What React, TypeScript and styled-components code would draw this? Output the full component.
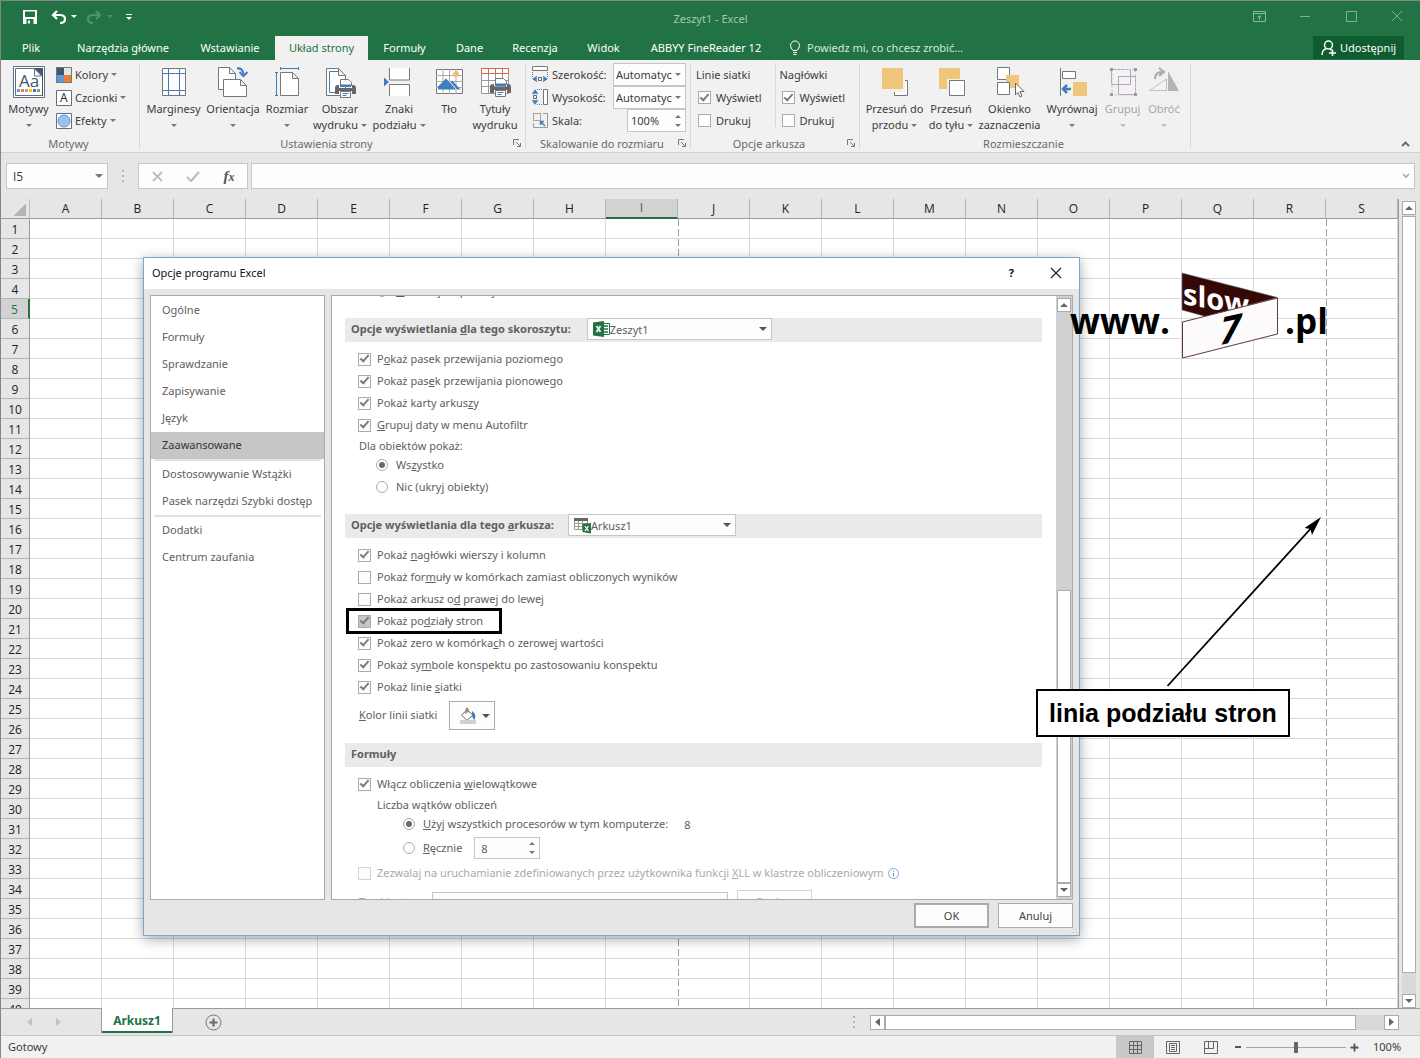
import React from "react";
import styled, { createGlobalStyle, css } from "styled-components";

const green = "#217346";
const chrome = "#e6e6e6";
const ribbonBg = "#f1f1f1";

const GlobalStyle = createGlobalStyle`
  *, *::before, *::after { box-sizing: border-box; }
  body { margin: 0; font-family: "Noto Sans", "Open Sans", sans-serif; font-size: 11px; color: #3c3c3c; }
  button, input, select { font: inherit; color: inherit; margin: 0; padding: 0; }
  button { background: none; border: 0; cursor: default; }
  h2, h3 { margin: 0; font-size: inherit; font-weight: inherit; }
  svg { display: block; flex: none; }
`;

/* ---------- shared controls ---------- */

const Caret = styled.span<{ $up?: boolean; $size?: number; $color?: string }>`
  display: inline-block;
  flex: none;
  width: 0;
  height: 0;
  border: ${(p) => p.$size ?? 3}px solid transparent;
  ${(p) =>
    p.$up
      ? css`border-top: 0; border-bottom-color: ${p.$color ?? "#777"};`
      : css`border-bottom: 0; border-top-color: ${p.$color ?? "#777"};`}
`;

const SideCaret = styled.span<{ $dir: "left" | "right"; $color?: string }>`
  width: 0;
  height: 0;
  border: 4px solid transparent;
  ${(p) =>
    p.$dir === "left"
      ? css`border-left: 0; border-right: 5px solid ${p.$color ?? "#666"};`
      : css`border-right: 0; border-left: 5px solid ${p.$color ?? "#666"};`}
`;

const Tick = styled.input<{ $pressed?: boolean }>`
  appearance: none;
  flex: none;
  width: 13px;
  height: 13px;
  border: 1px solid #ababab;
  background: ${(p) => (p.$pressed ? "#c6c6c6" : "#fdfdfd")};
  display: grid;
  place-items: center;
  &:checked::after {
    content: "";
    width: 5px;
    height: 9px;
    margin-top: -3px;
    border: solid #7a7a7a;
    border-width: 0 2px 2px 0;
    transform: rotate(42deg);
  }
  &:disabled { border-color: #d4d4d4; }
`;

const Radio = styled.input`
  appearance: none;
  flex: none;
  width: 12px;
  height: 12px;
  border: 1px solid #ababab;
  border-radius: 50%;
  background: #fff;
  display: grid;
  place-items: center;
  &:checked::after {
    content: "";
    width: 6px;
    height: 6px;
    border-radius: 50%;
    background: #6a6a6a;
  }
`;

const Field = styled.span<{ $w: number; $h?: number; $pl?: number; $top?: boolean }>`
  display: flex;
  align-items: center;
  align-self: ${(p) => (p.$top ? "flex-start" : "auto")};
  flex: none;
  width: ${(p) => p.$w}px;
  height: ${(p) => p.$h ?? 22}px;
  padding: 0 4px 0 ${(p) => p.$pl ?? 0}px;
  border: 1px solid #c6c6c6;
  background: #fdfdfd;
`;

const Select = styled.select`
  appearance: none;
  flex: 1;
  min-width: 0;
  margin-right: 3px;
  border: 0;
  outline: 0;
  background: transparent;
  overflow: hidden;
`;

const TextInput = styled.input`
  flex: 1;
  min-width: 0;
  width: 100%;
  border: 0;
  outline: 0;
  background: transparent;
  padding-left: 3px;
`;

const SpinArrows = styled.span`
  display: flex;
  flex-direction: column;
  gap: 6px;
`;

const Spin = () => (
  <SpinArrows>
    <Caret $up />
    <Caret />
  </SpinArrows>
);

/* ---------- window frame ---------- */

const Window = styled.div`
  position: relative;
  display: flex;
  flex-direction: column;
  height: 100vh;
  overflow: hidden;
  border-top: 1px solid #868686;
  border-left: 1px solid #868686;
  background: ${chrome};
`;

const TitleBar = styled.header`
  display: grid;
  grid-template-columns: 1fr auto 1fr;
  height: 35px;
  background: ${green};
  color: #a3c7b3;
`;

const QuickAccess = styled.div`
  display: flex;
  align-items: center;
  padding: 0 0 5px 22px;
  gap: 5px;
`;

const QuickButton = styled.button<{ $gap?: number }>`
  display: flex;
  align-items: center;
  margin-right: ${(p) => p.$gap ?? 0}px;
`;

const WindowTitle = styled.div`
  line-height: 36px;
`;

const WindowButtons = styled.div`
  display: flex;
  justify-content: flex-end;
  align-items: flex-start;
  button {
    width: 46px;
    height: 30px;
    display: grid;
    place-items: center;
  }
`;

const TabStrip = styled.nav`
  display: flex;
  height: 24px;
  background: ${green};
  color: #fff;
`;

const RibbonTab = styled.button<{ $w: number; $active?: boolean }>`
  width: ${(p) => p.$w}px;
  padding-bottom: 1px;
  white-space: nowrap;
  background: ${(p) => (p.$active ? ribbonBg : "transparent")};
  color: ${(p) => (p.$active ? green : "#fff")};
`;

const TellMe = styled.label`
  display: flex;
  align-items: center;
  gap: 6px;
  flex: 1;
  padding: 0 0 1px 12px;
  color: #d5e6dc;
  input::placeholder { color: #d5e6dc; }
  input { padding: 0; }
`;

const Share = styled.button`
  display: flex;
  align-items: center;
  justify-content: center;
  gap: 4px;
  width: 91px;
  height: 23px;
  margin-right: 16px;
  background: #0e5c2f;
  color: #fff;
`;

/* ---------- ribbon ---------- */

const Ribbon = styled.div`
  display: flex;
  height: 93px;
  padding-top: 3px;
  border-bottom: 1px solid #d2d2d2;
  background: ${ribbonBg};
`;

const Group = styled.section<{ $w: number; $pad: number }>`
  display: flex;
  flex-direction: column;
  width: ${(p) => p.$w}px;
  height: 85px;
  padding-left: ${(p) => p.$pad}px;
  border-right: 1px solid #d8d8d8;
`;

const GroupBody = styled.div`
  display: flex;
  flex: none;
  height: 73px;
`;

const GroupFooter = styled.div<{ $pad: number }>`
  display: flex;
  flex: none;
  align-items: center;
  height: 16px;
  margin-left: -${(p) => p.$pad}px;
  padding: 0 3px 1px 0;
  color: #6a6a6a;
  h2 { flex: 1; text-align: center; }
`;

const BigButton = styled.button<{ $w: number }>`
  display: flex;
  flex-direction: column;
  align-items: center;
  width: ${(p) => p.$w}px;
  padding-top: 3px;
  line-height: 16px;
  white-space: nowrap;
  svg { margin-bottom: 3px; }
  &:disabled { color: #a6a6a6; }
`;

const LabelLine = styled.span`
  display: flex;
  align-items: center;
  gap: 3px;
  height: 16px;
`;

const SmallColumn = styled.div<{ $ml?: number }>`
  display: flex;
  flex-direction: column;
  margin-left: ${(p) => p.$ml ?? 0}px;
`;

const SmallButton = styled.button`
  display: flex;
  align-items: center;
  gap: 3px;
  height: 23px;
`;

const ScaleRow = styled.div`
  display: flex;
  align-items: center;
  gap: 3px;
  width: 154px;
  height: 23px;
  label { flex: 1; white-space: nowrap; }
`;

const OptionColumn = styled.div`
  width: 84px;
  height: 64px;
  & + & { padding-left: 4px; }
  &:first-child { width: 80px; border-right: 1px solid #d8d8d8; }
  h3 { line-height: 23px; }
`;

const OptionLabel = styled.label`
  display: flex;
  align-items: center;
  gap: 5px;
  height: 23px;
  padding-left: 2px;
`;

const CollapseButton = styled.button`
  margin: auto 10px 5px auto;
`;

/* ---------- formula bar ---------- */

const FormulaBar = styled.div`
  display: flex;
  height: 46px;
  padding: 10px 5px 10px 5px;
`;

const NameBox = styled(Field)`
  font-family: "Open Sans", sans-serif;
  font-size: 12px;
  input { padding-left: 6px; }
`;

const Grip = styled.span<{ $w: number }>`
  display: grid;
  place-content: center;
  gap: 3px;
  width: ${(p) => p.$w}px;
  i { width: 2px; height: 2px; background: #b4b4b4; }
`;

const FormulaButtons = styled.div`
  display: flex;
  margin-right: 3px;
  border: 1px solid #c6c6c6;
  background: #fdfdfd;
  button { width: 36px; display: grid; place-items: center; }
`;

const Fx = styled.em`
  font: italic bold 15px "Liberation Serif", serif;
  color: #555;
  small { font-size: 12px; }
`;

const FormulaField = styled.div`
  display: flex;
  align-items: center;
  flex: 1;
  padding-right: 4px;
  border: 1px solid #c6c6c6;
  background: #fdfdfd;
`;

/* ---------- sheet ---------- */

const SheetArea = styled.div`
  display: flex;
  flex: 1;
  min-height: 0;
`;

const GridClip = styled.div`
  flex: 1;
  min-width: 0;
  overflow: hidden;
  border-right: 1px solid #9b9b9b;
  background: linear-gradient(${chrome} 20px, #fff 20px);
`;

const GridTable = styled.table`
  table-layout: fixed;
  width: 1397px;
  border-collapse: separate;
  border-spacing: 0;
  font-family: "Open Sans", sans-serif;
  font-size: 12px;
  color: #222;
  col { width: 72px; }
  col:first-child { width: 29px; }
  tr { height: 20px; }
  th, td { padding: 0; height: 20px; line-height: 16px; }
`;

const Corner = styled.td`
  border-right: 1px solid #bdbdbd;
  border-bottom: 1px solid #9b9b9b;
  background: linear-gradient(135deg, transparent 50%, #b4b4b4 50%) 13px 5px / 12px 12px no-repeat ${chrome};
`;

const ColHead = styled.th<{ $on?: boolean }>`
  font-weight: 400;
  border-right: 1px solid #b4b4b4;
  border-bottom: ${(p) => (p.$on ? `2px solid ${green}` : "1px solid #9b9b9b")};
  background: ${(p) => (p.$on ? "#d2d2d2" : chrome)};
  color: ${(p) => (p.$on ? green : "inherit")};
`;

const RowHead = styled.th<{ $on?: boolean }>`
  font-weight: 400;
  && { padding-top: 2px; }
  border-bottom: 1px solid #b4b4b4;
  border-right: ${(p) => (p.$on ? `2px solid ${green}` : "1px solid #9b9b9b")};
  background: ${(p) => (p.$on ? "#d2d2d2" : chrome)};
  color: ${(p) => (p.$on ? green : "inherit")};
`;

const Cell = styled.td<{ $break?: boolean; $open?: boolean }>`
  border-bottom: 1px solid #d9d9d9;
  border-right: ${(p) => (p.$open ? "0" : "1px solid #d9d9d9")};
  background: ${(p) =>
    p.$break
      ? "repeating-linear-gradient(#a0a0a0 0 7px, #fff 7px 10px) left top / 1px 20px no-repeat #fff"
      : "#fff"};
`;

const VScroll = styled.div`
  display: flex;
  flex-direction: column;
  width: 14px;
  margin: 2px 4px 0 3px;
  background: #d9d9d9;
`;

const ScrollButton = styled.button`
  display: grid;
  place-items: center;
  flex: none;
  width: 14px;
  height: 14px;
  border: 1px solid #ababab;
  background: #fff;
`;

const VThumb = styled.div`
  flex: 1;
  margin: 1px 0 21px;
  border: 1px solid #ababab;
  background: #fff;
`;

const SheetTabs = styled.div`
  display: flex;
  align-items: center;
  height: 28px;
  padding-right: 21px;
  border-top: 1px solid #9b9b9b;
  border-bottom: 1px solid #c6c6c6;
`;

const TabArrows = styled.div`
  display: flex;
  gap: 24px;
  width: 100px;
  padding-left: 26px;
`;

const SheetTab = styled.button`
  align-self: flex-start;
  width: 72px;
  height: 25px;
  margin-top: -1px;
  border: solid #9b9b9b;
  border-width: 0 1px 0;
  box-shadow: inset 0 -2px ${green};
  background: #fff;
  color: ${green};
  font-size: 12px;
  font-weight: 700;
`;

const AddSheet = styled.button`
  margin: 0 auto 0 32px;
`;

const HScroll = styled.div`
  display: flex;
  width: 529px;
  height: 15px;
  background: #d9d9d9;
  button { height: 15px; width: 15px; }
`;

const HThumb = styled.div`
  flex: 1;
  margin-right: 28px;
  border: 1px solid #ababab;
  background: #fff;
`;

const StatusBar = styled.footer`
  display: flex;
  align-items: center;
  height: 22px;
  padding: 0 19px 0 7px;
  background: ${ribbonBg};
`;

const Status = styled.span`
  flex: 1;
  padding-bottom: 1px;
`;

const ViewButton = styled.button<{ $on?: boolean }>`
  display: grid;
  place-items: center;
  width: 38px;
  height: 22px;
  background: ${(p) => (p.$on ? "#c8c8c8" : "transparent")};
`;

const ZoomSlider = styled.input`
  appearance: none;
  width: 100px;
  height: 12px;
  margin: 0 4px 0 1px;
  background: linear-gradient(#a6a6a6, #a6a6a6) center / 100% 1px no-repeat;
  &::-webkit-slider-thumb { appearance: none; width: 4px; height: 11px; background: #666; }
`;

const ZoomValue = styled.span`
  width: 28px;
  margin-left: 14px;
  padding-bottom: 1px;
`;

/* ---------- dialog ---------- */

const Dialog = styled.div`
  position: absolute;
  left: 142px;
  top: 256px;
  display: flex;
  flex-direction: column;
  width: 937px;
  height: 679px;
  border: 1px solid #7ba3d3;
  background: ${chrome};
  box-shadow: 0 3px 12px rgba(0, 0, 0, 0.35);
  color: #606060;
`;

const DialogTitle = styled.div`
  display: flex;
  align-items: center;
  height: 31px;
  padding: 0 17px 2px 8px;
  background: #fff;
  color: #111;
  h2 { flex: 1; }
`;

const HelpButton = styled.button`
  margin-right: 36px;
  font-weight: 700;
`;

const DialogBody = styled.div`
  display: flex;
  gap: 6px;
  flex: 1;
  min-height: 0;
  padding: 6px 6px 0;
`;

const DialogNav = styled.nav`
  width: 175px;
  padding-top: 1px;
  border: 1px solid #ababab;
  background: #fff;
  hr { height: 2px; margin: 0 3px; border: 0; background: #e3e3e3; }
`;

const NavItem = styled.button<{ $on?: boolean }>`
  display: block;
  width: 100%;
  height: 27px;
  padding: 0 0 2px 11px;
  text-align: left;
  white-space: nowrap;
  background: ${(p) => (p.$on ? "#c6c6c6" : "transparent")};
  color: ${(p) => (p.$on ? "#333" : "inherit")};
`;

const OptionsPane = styled.div`
  display: flex;
  flex: 1;
  min-width: 0;
  border: 1px solid #ababab;
  background: #fff;
  overflow: hidden;
`;

const Scrolled = styled.div`
  flex: 1;
  margin-top: -16px;
  padding: 0 14px 0 13px;
  white-space: nowrap;
`;

const PaneScroll = styled.div`
  display: flex;
  flex-direction: column;
  width: 16px;
  padding: 2px 1px;
  background: #d0d0d0;
`;

const PaneThumb = styled.div`
  flex: 1;
  margin-top: 278px;
  border: 1px solid #ababab;
  background: #fff;
`;

const SectionHead = styled.div<{ $gap?: number }>`
  display: flex;
  align-items: center;
  gap: ${(p) => p.$gap ?? 14}px;
  height: 24px;
  margin: 13px 0 6px;
  padding-left: 6px;
  background: #eaeaea;
  h3 { padding-bottom: 3px; font-weight: 700; }
`;

const OptionRow = styled.label<{ $indent?: number; $mark?: boolean }>`
  position: relative;
  display: flex;
  align-items: center;
  gap: ${(p) => (p.$indent ? 8 : 6)}px;
  width: fit-content;
  height: 22px;
  margin-left: ${(p) => p.$indent ?? 13}px;
  ${(p) =>
    p.$mark &&
    css`
      &::after {
        content: "";
        position: absolute;
        inset: -2px -19px -2px -12px;
        border: 3px solid #000;
      }
    `}
`;

const RowText = styled.span`
  padding-bottom: 2px;
`;

const Inline = styled.div<{ $mt?: number; $gap?: number; $disabled?: boolean }>`
  display: flex;
  align-items: center;
  gap: ${(p) => p.$gap ?? 0}px;
  margin-top: ${(p) => p.$mt ?? 0}px;
  color: ${(p) => (p.$disabled ? "#a9a9a9" : "inherit")};
`;

const SubLabel = styled.div<{ $indent?: number }>`
  height: 18px;
  line-height: 19px;
  margin-left: ${(p) => p.$indent ?? 0}px;
`;

const Spacer = styled.div`
  height: 3px;
`;

const ColorButton = styled.button`
  display: flex;
  align-items: center;
  gap: 5px;
  width: 46px;
  height: 29px;
  padding-left: 9px;
  border: 1px solid #ababab;
  background: #fdfdfd;
`;

const DialogFooter = styled.div`
  display: flex;
  justify-content: flex-end;
  gap: 9px;
  height: 35px;
  padding: 3px 6px 0;
`;

const DialogButton = styled.button<{ $primary?: boolean; $disabled?: boolean }>`
  width: 75px;
  height: 25px;
  padding-bottom: ${(p) => (p.$disabled ? 3 : 1)}px;
  border: ${(p) => (p.$primary ? 2 : 1)}px solid ${(p) => (p.$disabled ? "#d4d4d4" : "#ababab")};
  background: #fdfdfd;
  color: ${(p) => (p.$disabled ? "#a9a9a9" : "#444")};
`;

const ClusterLabel = styled.label`
  width: 64px;
  margin-left: 14px;
  padding-bottom: 3px;
`;

const ResizeGrip = styled.span`
  position: absolute;
  right: 1px;
  bottom: 1px;
  width: 9px;
  height: 9px;
  background: radial-gradient(#b0b0b0 1px, transparent 1px) 0 0 / 3px 3px;
  clip-path: polygon(100% 0, 100% 100%, 0 100%);
`;

/* ---------- annotations laid over the sheet ---------- */

const LogoMark = styled.svg`
  position: absolute;
  left: 1067px;
  top: 267px;
`;

const ArrowMark = styled.svg`
  position: absolute;
  left: 1161px;
  top: 512px;
`;

const Callout = styled.div`
  position: absolute;
  left: 1035px;
  top: 688px;
  padding: 0 11px;
  border: 2px solid #000;
  background: #fff;
  color: #000;
  font: bold 25px/44px "Liberation Sans", Arial, sans-serif;
  white-space: nowrap;
`;

/* ---------- icons ---------- */

const Svg = ({ w = 32, h = w, children }: { w?: number; h?: number; children: React.ReactNode }) => (
  <svg width={w} height={h} viewBox={`0 0 ${w} ${h}`} fill="none" aria-hidden="true">
    {children}
  </svg>
);

const blue = "#3f7dbd";

const Page = ({ x, y, w, h, f = 7 }: { x: number; y: number; w: number; h: number; f?: number }) => (
  <path
    d={`M${x} ${y}h${w - f}l${f} ${f}v${h - f}h${-w}z M${x + w - f} ${y}v${f}h${f}`}
    fill="#fff"
    stroke="#777"
  />
);

const Printer = ({ x, y }: { x: number; y: number }) => (
  <g transform={`translate(${x} ${y})`}>
    <path d="M5.500 7v-6.500h8l3 3v3.500" fill="#fff" stroke="#777" />
    <path d="M0 9q0-3 3-3h1v3h13v-3h1q3 0 3 3v6h-4v-3h-13v3h-4z" fill="#666" />
    <path d="M5 5.500h11v2.500h-11z" fill={blue} />
    <path d="M5.500 12.500h10v6h-10z" fill="#fff" stroke="#777" />
    <path d="M7.500 14.500h6M7.500 16.500h4" stroke={blue} />
  </g>
);

const ThemesIcon = () => (
  <Svg>
    <path d="M.5.500h31v31h-31z" fill="#fff" stroke="#5f6f88" />
    <path d="M2.500 2.500h27v27h-27z" fill="#fff" stroke="#5f6f88" />
    <path d="M21 2h9v28h-1V10z" fill="#44546a" />
    <path d="M21.500 2.500v7.500h7z" fill="#fff" stroke="#5f6f88" />
    <text x="6" y="21" fontSize="17" fill="#44546a" fontFamily="Open Sans">Aa</text>
    {["#5b9bd5", "#ed7d31", "#a5a5a5", "#ffc000", "#4472c4", "#70ad47"].map((c, i) => (
      <path key={c} d={`M${4 + i * 4} 23h3v3h-3z`} fill={c} />
    ))}
  </Svg>
);

const ColorsIcon = () => (
  <Svg w={16}>
    <path d="M0 0h8v8H0z" fill="#44546a" />
    <path d="M8 0h8v8H8z" fill="#e7e6e6" />
    <path d="M0 8h8v8H0z" fill="#5b9bd5" />
    <path d="M8 8h8v8H8z" fill="#ed7d31" />
    <path d="M.5.500h15v15H.5z" stroke="#777" />
  </Svg>
);

const FontsIcon = () => (
  <Svg w={16}>
    <path d="M.5.500h15v15H.5z" fill="#fff" stroke="#5f6f88" />
    <text x="4" y="12" fontSize="12" fill="#222" fontFamily="Open Sans">A</text>
  </Svg>
);

const EffectsIcon = () => (
  <Svg w={16}>
    <path d="M.5.500h15v15H.5z" fill="#fff" stroke="#5f6f88" />
    <circle cx="8" cy="8" r="6" fill="#9dc3ea" stroke="#5b8fcb" />
  </Svg>
);

const MarginsIcon = () => (
  <Svg>
    <path d="M4.500 2.500h23v27h-23z" fill="#fff" stroke="#777" />
    <path d="M10.500 3v26M21.500 3v26M5 7.500h22M5 24.500h22" stroke={blue} />
  </Svg>
);

const OrientationIcon = () => (
  <Svg>
    <Page x={1.5} y={1.5} w={17} h={22} f={6} />
    <Page x={6.5} y={13.5} w={23} h={17} f={6} />
    <path d="M20 2.500q6-1 6.500 6" stroke={blue} strokeWidth="2" />
    <path d="M22.500 6l4 4 4-4" stroke={blue} strokeWidth="2" />
  </Svg>
);

const SizeIcon = () => (
  <Svg>
    <Page x={9.5} y={6.5} w={18} h={23} f={6} />
    <path d="M9 2.500h18M9.500 1v3M27.500 1v3M5.500 7v22M4 6.500h3M4 29.500h3" stroke={blue} />
  </Svg>
);

const PrintAreaIcon = () => (
  <Svg>
    <Page x={2.5} y={2.5} w={19} h={27} f={7} />
    <path d="M14 5.500H5.500v21H12" stroke={blue} />
    <Printer x={11} y={13} />
  </Svg>
);

const BreaksIcon = () => (
  <Svg>
    <path d="M6.500 2v12h20V2M6.500 30V18.500h20V30" fill="#fff" stroke="#777" />
    <path d="M1 11.500l5 4.500-5 4.500z" fill={blue} />
  </Svg>
);

const BackgroundIcon = () => (
  <Svg>
    <path d="M3.500 3.500h26v24h-26z" fill="#fff" stroke="#777" />
    <path d="M10 3v25M16.500 3v25M23 3v25M3 9.500h27M3 15.500h27M3 21.500h27" stroke="#aaa" />
    <circle cx="23" cy="8" r="3" fill="#f0c070" />
    <path d="M5 23.500v-3l8-8 4 4 2-2 8.500 9z" fill={blue} />
    <path d="M16.500 15.500l7 8" stroke="#fff" />
  </Svg>
);

const TitlesIcon = () => (
  <Svg>
    <path d="M2.500 3.500h27v24h-27z" fill="#fff" stroke="#999" />
    <path d="M9.500 8v20M16.500 8v20M23.500 8v20M2 14.500h27M2 20.500h27" stroke="#999" />
    <path d="M2.500 2.500h27v5h-27zM9.500 3v5M16.500 3v5M23.500 3v5" fill="#fff" stroke="#d0694f" />
    <Printer x={11} y={12} />
  </Svg>
);

const WidthIcon = () => (
  <Svg w={17}>
    <path d="M.5.500h15v4H.5z" fill="#fff" stroke="#777" />
    <path d="M.5 6v5M15.500 6v5" stroke="#777" strokeDasharray="1 1" />
    <path d="M6.500 11.500h3v3h-3z" stroke="#666" />
    <path d="M5 10.500L1.500 13 5 15.500M11 10.500l3.500 2.500-3.500 2.500M1 13h4M11 13h4" stroke={blue} strokeWidth="1.500" />
  </Svg>
);

const HeightIcon = () => (
  <Svg w={17}>
    <path d="M11.500.500h4v15h-4z" fill="#fff" stroke="#777" />
    <path d="M5 .5h5M5 15.500h5" stroke="#777" strokeDasharray="1 1" />
    <path d="M1.500 6.500h3v3h-3z" stroke="#666" />
    <path d="M.5 5L3 1.500 5.500 5M.5 11L3 14.500 5.500 11M3 1v4M3 11v4" stroke={blue} strokeWidth="1.500" />
  </Svg>
);

const ScaleIcon = () => (
  <Svg w={17}>
    <path d="M11 1.500h4.500v14h-14V11" stroke="#999" />
    <path d="M1.500 1.500h7v7h-7z" stroke="#555" strokeDasharray="1 1" />
    <path d="M8 9.500h4M8.500 9v4M9 10l4 4" stroke={blue} strokeWidth="1.400" />
  </Svg>
);

const gold = "#efc67c";

const FrontIcon = () => (
  <Svg>
    <path d="M15.500 14.500h13v15h-13z" fill="#fff" stroke="#777" />
    <path d="M2 2h24v24H2z" fill={ribbonBg} />
    <path d="M3 2h21v21H3z" fill={gold} />
  </Svg>
);

const BackIcon = () => (
  <Svg>
    <path d="M4 2h21v21H4z" fill={gold} />
    <path d="M12 13h18v18H12z" fill={ribbonBg} />
    <path d="M14.500 14.500h15v15h-15z" fill="#fff" stroke="#777" />
  </Svg>
);

const SelectionIcon = () => (
  <Svg>
    <path d="M3.500 1.500h12v12h-12z" fill="#fff" stroke="#777" />
    <path d="M12 9h13v13H12z" fill={gold} />
    <path d="M3.500 16.500h12v12h-12z" fill="#fff" stroke="#777" />
    <path d="M21.500 17v12l2.500-2.500 2 4.500 2-1-2-4.500h4z" fill="#fff" stroke="#666" />
  </Svg>
);

const AlignIcon = () => (
  <Svg>
    <path d="M4.500 2v28" stroke="#777" />
    <path d="M6.500 5.500h13v7h-13z" fill="#fff" stroke="#777" />
    <path d="M17 16h14v14H17z" fill={gold} />
    <path d="M11 19l-4 4 4 4M7 23h8" stroke={blue} strokeWidth="2.500" />
  </Svg>
);

const GroupIcon = () => (
  <Svg>
    <path d="M4.500 3.500h19v15h-19zM11.500 10.500h17v18h-17z" fill="#f6f0f8" stroke="#aaa" />
    <path d="M11.500 10.500h12v8h-12z" stroke="#aaa" />
    <path d="M5 3.500h23.500v25.500H5z" stroke="#c8c0cc" strokeDasharray="2 2" />
    <path d="M3 2h3v3H3zM27 2h3v3h-3zM3 27h3v3H3zM27 27h3v3h-3z" fill="#999" />
  </Svg>
);

const RotateIcon = () => (
  <Svg>
    <path d="M1.500 24.500L18.500 13v11.500z" fill="#f6f0f8" stroke="#c0c0c0" />
    <path d="M20 5l11 20H20z" fill="#b4b4b4" />
    <path d="M7 13q0-7 7-7M11 2l5 4-5 4" stroke="#aaa" strokeWidth="2" />
  </Svg>
);

const Launcher = () => (
  <Svg w={9}>
    <path d="M.5 6V.5H6M7.500 4v3.500H4M3 3l4 4" stroke="#777" />
  </Svg>
);

const BucketIcon = () => (
  <Svg w={18} h={17}>
    <path d="M8 3l6 5-6 5.500-5.500-5.500z" fill="#fff" stroke="#666" />
    <path d="M7 7V2.500q0-2 2-1l0 4" stroke="#666" />
    <path d="M13 4q5 3 2.500 9-3-2-2.500-9z" fill={blue} />
    <path d="M1 13h16v4H1z" fill="#d0d0d0" />
  </Svg>
);

const ExcelFileIcon = () => (
  <Svg w={17}>
    <path d="M9 2.500h7.500v11H9z" fill="#fff" stroke={green} />
    <path d="M10 5h5M10 8h5M10 11h5" stroke={green} strokeWidth="1.500" />
    <path d="M0 1.500L11 0v16L0 14.500z" fill={green} />
    <path d="M3.500 5l4 6M7.500 5l-4 6" stroke="#fff" strokeWidth="1.600" />
  </Svg>
);

const SheetFileIcon = () => (
  <Svg w={17}>
    <path d="M.5 1.500h13v11H.5zM4.500 2v10M8.500 2v10M1 6.500h12M1 9.500h12" fill="#fff" stroke="#999" />
    <path d="M0 1h14v3H0z" fill="#666" />
    <path d="M8.500 7L17 6v10.500L8.500 15z" fill={green} />
    <path d="M11 9l3.500 5M14.500 9L11 14" stroke="#fff" strokeWidth="1.300" />
  </Svg>
);

/* ---------- data ---------- */

const tabs: [string, number][] = [
  ["Plik", 60],
  ["Narzędzia główne", 124],
  ["Wstawianie", 90],
  ["Układ strony", 93],
  ["Formuły", 73],
  ["Dane", 57],
  ["Recenzja", 74],
  ["Widok", 63],
  ["ABBYY FineReader 12", 142],
];

type Big = { label: string; second?: string; w: number; icon: React.ReactNode; menu?: boolean; off?: boolean };

const pageSetup: Big[] = [
  { label: "Marginesy", w: 59, icon: <MarginsIcon />, menu: true },
  { label: "Orientacja", w: 60, icon: <OrientationIcon />, menu: true },
  { label: "Rozmiar", w: 48, icon: <SizeIcon />, menu: true },
  { label: "Obszar", second: "wydruku", w: 58, icon: <PrintAreaIcon />, menu: true },
  { label: "Znaki", second: "podziału", w: 60, icon: <BreaksIcon />, menu: true },
  { label: "Tło", w: 40, icon: <BackgroundIcon /> },
  { label: "Tytuły", second: "wydruku", w: 52, icon: <TitlesIcon /> },
];

const arrange: Big[] = [
  { label: "Przesuń do", second: "przodu", w: 59, icon: <FrontIcon />, menu: true },
  { label: "Przesuń", second: "do tyłu", w: 54, icon: <BackIcon />, menu: true },
  { label: "Okienko", second: "zaznaczenia", w: 63, icon: <SelectionIcon /> },
  { label: "Wyrównaj", w: 62, icon: <AlignIcon />, menu: true },
  { label: "Grupuj", w: 39, icon: <GroupIcon />, menu: true, off: true },
  { label: "Obróć", w: 44, icon: <RotateIcon />, menu: true, off: true },
];

const columns = "ABCDEFGHIJKLMNOPQRS".split("");
const rows = Array.from({ length: 40 }, (_, i) => i + 1);

const workbookOptions = ["P&okaż pasek przewijania poziomego", "Pokaż pas&ek przewijania pionowego", "Pokaż karty arkus&zy", "&Grupuj daty w menu Autofiltr"];

const sheetOptions = [
  { text: "Pokaż &nagłówki wierszy i kolumn", on: true },
  { text: "Pokaż for&muły w komórkach zamiast obliczonych wyników", on: false },
  { text: "Pokaż arkusz o&d prawej do lewej", on: false },
  { text: "Pokaż po&działy stron", on: true, mark: true },
  { text: "Pokaż zero w komórka&ch o zerowej wartości", on: true },
  { text: "Pokaż sy&mbole konspektu po zastosowaniu konspektu", on: true },
  { text: "Pokaż linie &siatki", on: true },
];

/* ---------- composed parts ---------- */

/* "&" precedes the letter that is the keyboard shortcut. */
const Mnemonic = ({ text }: { text: string }) => {
  const i = text.indexOf("&");
  return (
    <RowText>
      {text.slice(0, i)}
      <u>{text[i + 1]}</u>
      {text.slice(i + 2)}
    </RowText>
  );
};

const RibbonButton = ({ label, second, w, icon, menu, off }: Big) => (
  <BigButton $w={w} disabled={off}>
    {icon}
    <LabelLine>{label}</LabelLine>
    <LabelLine>
      {second}
      {menu && <Caret $color={off ? "#bbb" : "#777"} />}
    </LabelLine>
  </BigButton>
);

const RibbonGroup = ({ title, w, pad, launcher, children }: { title: string; w: number; pad: number; launcher?: boolean; children: React.ReactNode }) => (
  <Group $w={w} $pad={pad}>
    <GroupBody>{children}</GroupBody>
    <GroupFooter $pad={pad}>
      <h2>{title}</h2>
      {launcher && (
        <button aria-label={title}>
          <Launcher />
        </button>
      )}
    </GroupFooter>
  </Group>
);

const Header = () => (
  <>
    <TitleBar>
      <QuickAccess>
        <QuickButton aria-label="Zapisz" $gap={9}>
          <Svg w={14}>
            <path d="M0 0h14v14H0z M2 1.500h10V7H2z M3.500 9h7v5h-7z" fill="#fff" fillRule="evenodd" />
            <path d="M5 10.500h2v3H5z" fill="#fff" />
          </Svg>
        </QuickButton>
        <QuickButton aria-label="Cofnij">
          <Svg w={15} h={14}>
            <path d="M6 1L2 5l4 4M2.500 5H9q5 0 5 4t-5 4" stroke="#fff" strokeWidth="2.200" />
          </Svg>
        </QuickButton>
        <Caret $color="#fff" />
        <QuickButton aria-label="Ponów">
          <Svg w={20} h={14}>
            <path d="M14 1l4 4-4 4M17.500 5H11Q6 5 6 9t5 4" stroke="#4f9070" strokeWidth="2.200" />
          </Svg>
        </QuickButton>
        <Caret $color="#4f9070" />
        <QuickButton aria-label="Dostosuj pasek narzędzi">
          <Svg w={32} h={8}>
            <path d="M8 1.500h6" stroke="#fff" />
            <path d="M8 4h6l-3 3z" fill="#fff" />
          </Svg>
        </QuickButton>
      </QuickAccess>
      <WindowTitle>Zeszyt1 - Excel</WindowTitle>
      <WindowButtons>
        <button aria-label="Opcje wyświetlania Wstążki">
          <Svg w={13} h={11}>
            <path d="M.5.500h12v10H.5zM1 2.500h11M6.500 9V4.500M4.500 6.500l2-2 2 2" stroke="#8ab89e" />
          </Svg>
        </button>
        <button aria-label="Minimalizuj">
          <Svg w={10}>
            <path d="M0 5.500h10" stroke="#7fb095" />
          </Svg>
        </button>
        <button aria-label="Maksymalizuj">
          <Svg w={11}>
            <path d="M.5.500h10v10H.5z" stroke="#7fb095" />
          </Svg>
        </button>
        <button aria-label="Zamknij">
          <Svg w={10}>
            <path d="M0 0l10 10M10 0L0 10" stroke="#7fb095" />
          </Svg>
        </button>
      </WindowButtons>
    </TitleBar>
    <TabStrip>
      {tabs.map(([t, w]) => (
        <RibbonTab key={t} $w={w} $active={t === "Układ strony"}>
          {t}
        </RibbonTab>
      ))}
      <TellMe>
        <Svg w={12} h={15}>
          <path d="M4 10.500Q1.500 8 1.500 5.500a4.500 4.500 0 019 0Q10.500 8 8 10.500zM4 12.500h4M4.500 14.500h3" stroke="#fff" />
        </Svg>
        <TextInput aria-label="Powiedz mi" placeholder="Powiedz mi, co chcesz zrobić..." />
      </TellMe>
      <Share>
        <Svg w={15} h={16}>
          <circle cx="7.500" cy="5" r="4" stroke="#fff" strokeWidth="1.500" />
          <path d="M1 15q0-5 4.500-6.500M9.500 9l1 1.500M8 13h7M11.500 9.500v6.500" stroke="#fff" strokeWidth="1.500" />
        </Svg>
        Udostępnij
      </Share>
    </TabStrip>
  </>
);

const RibbonPanel = () => (
  <Ribbon>
    <RibbonGroup title="Motywy" w={139} pad={4}>
      <RibbonButton label="Motywy" w={47} icon={<ThemesIcon />} menu />
      <SmallColumn $ml={4}>
        <SmallButton><ColorsIcon />Kolory <Caret /></SmallButton>
        <SmallButton><FontsIcon />Czcionki <Caret /></SmallButton>
        <SmallButton><EffectsIcon />Efekty <Caret /></SmallButton>
      </SmallColumn>
    </RibbonGroup>
    <RibbonGroup title="Ustawienia strony" w={386} pad={4} launcher>
      {pageSetup.map((b) => (
        <RibbonButton key={b.label} {...b} />
      ))}
    </RibbonGroup>
    <RibbonGroup title="Skalowanie do rozmiaru" w={165} pad={6} launcher>
      <SmallColumn>
        <ScaleRow>
          <WidthIcon />
          <label htmlFor="fit-w">Szerokość:</label>
          <Field $w={73} $h={23} $pl={2}>
            <Select id="fit-w"><option>Automatycznie</option></Select>
            <Caret />
          </Field>
        </ScaleRow>
        <ScaleRow>
          <HeightIcon />
          <label htmlFor="fit-h">Wysokość:</label>
          <Field $w={73} $h={23} $pl={2}>
            <Select id="fit-h"><option>Automatycznie</option></Select>
            <Caret />
          </Field>
        </ScaleRow>
        <ScaleRow>
          <ScaleIcon />
          <label htmlFor="scale">Skala:</label>
          <Field $w={59} $h={23}>
            <TextInput id="scale" defaultValue="100%" />
            <Spin />
          </Field>
        </ScaleRow>
      </SmallColumn>
    </RibbonGroup>
    <RibbonGroup title="Opcje arkusza" w={169} pad={5} launcher>
      {["Linie siatki", "Nagłówki"].map((t) => (
        <OptionColumn key={t}>
          <h3>{t}</h3>
          <OptionLabel><Tick type="checkbox" defaultChecked />Wyświetl</OptionLabel>
          <OptionLabel><Tick type="checkbox" />Drukuj</OptionLabel>
        </OptionColumn>
      ))}
    </RibbonGroup>
    <RibbonGroup title="Rozmieszczanie" w={331} pad={5}>
      {arrange.map((b) => (
        <RibbonButton key={b.label} {...b} />
      ))}
    </RibbonGroup>
    <CollapseButton aria-label="Zwiń Wstążkę">
      <Svg w={9} h={6}>
        <path d="M1 5l3.500-3.500L8 5" stroke="#666" strokeWidth="1.800" />
      </Svg>
    </CollapseButton>
  </Ribbon>
);

const Formula = () => (
  <FormulaBar>
    <NameBox $w={102} $h={26}>
      <TextInput aria-label="Pole nazwy" defaultValue="I5" />
      <Caret $size={4} />
    </NameBox>
    <Grip $w={30}><i /><i /><i /></Grip>
    <FormulaButtons>
      <button aria-label="Anuluj">
        <Svg w={11}><path d="M1 1l9 9M10 1l-9 9" stroke="#bdbdbd" strokeWidth="1.800" /></Svg>
      </button>
      <button aria-label="Wpis">
        <Svg w={14} h={11}><path d="M1 6l4 4 8-9" stroke="#bdbdbd" strokeWidth="2.200" /></Svg>
      </button>
      <button aria-label="Wstaw funkcję"><Fx>f<small>x</small></Fx></button>
    </FormulaButtons>
    <FormulaField>
      <TextInput aria-label="Pasek formuły" />
      <Svg w={8} h={6}><path d="M1 1l3 3 3-3" stroke="#aaa" strokeWidth="1.600" /></Svg>
    </FormulaField>
  </FormulaBar>
);

const Sheet = () => (
  <SheetArea>
    <GridClip>
      <GridTable>
        <colgroup>
          <col />
          {columns.map((c) => (
            <col key={c} />
          ))}
        </colgroup>
        <thead>
          <tr>
            <Corner />
            {columns.map((c) => (
              <ColHead key={c} scope="col" $on={c === "I"}>{c}</ColHead>
            ))}
          </tr>
        </thead>
        <tbody>
          {rows.map((r) => (
            <tr key={r}>
              <RowHead scope="row" $on={r === 5}>{r}</RowHead>
              {columns.map((c) => (
                <Cell key={c} $open={c === "I" || c === "R"} $break={c === "J" || c === "S"} />
              ))}
            </tr>
          ))}
        </tbody>
      </GridTable>
    </GridClip>
    <VScroll>
      <ScrollButton aria-label="W górę"><Caret $up $size={4} $color="#666" /></ScrollButton>
      <VThumb />
      <ScrollButton aria-label="W dół"><Caret $size={4} $color="#666" /></ScrollButton>
    </VScroll>
  </SheetArea>
);

const Bottom = () => (
  <>
    <SheetTabs>
      <TabArrows>
        <SideCaret $dir="left" $color="#c0c0c0" />
        <SideCaret $dir="right" $color="#c0c0c0" />
      </TabArrows>
      <SheetTab>Arkusz1</SheetTab>
      <AddSheet aria-label="Nowy arkusz">
        <Svg w={17}>
          <circle cx="8.500" cy="8.500" r="7.500" stroke="#777" />
          <path d="M8.500 4.500v8M4.500 8.500h8" stroke="#666" strokeWidth="2" />
        </Svg>
      </AddSheet>
      <Grip $w={32}><i /><i /><i /></Grip>
      <HScroll>
        <ScrollButton aria-label="W lewo"><SideCaret $dir="left" /></ScrollButton>
        <HThumb />
        <ScrollButton aria-label="W prawo"><SideCaret $dir="right" /></ScrollButton>
      </HScroll>
    </SheetTabs>
    <StatusBar>
      <Status>Gotowy</Status>
      <ViewButton $on aria-label="Normalny">
        <Svg w={13}><path d="M.5.500h12v12H.5zM4.500 0v13M8.500 0v13M0 4.500h13M0 8.500h13" stroke="#666" /></Svg>
      </ViewButton>
      <ViewButton aria-label="Układ strony">
        <Svg w={14} h={13}><path d="M.5.500h13v12H.5zM3.500 2.500h7v8h-7zM5 4.500h4M5 6.500h4M5 8.500h4" stroke="#666" /></Svg>
      </ViewButton>
      <ViewButton aria-label="Podgląd podziału stron">
        <Svg w={14} h={13}><path d="M.5.500h13v12H.5zM4.500 1v6M9.500 1v6.500H1" stroke="#666" /></Svg>
      </ViewButton>
      <button aria-label="Pomniejsz">
        <Svg w={15} h={10}><path d="M5 5h6" stroke="#555" strokeWidth="2" /></Svg>
      </button>
      <ZoomSlider type="range" aria-label="Powiększenie" defaultValue={50} />
      <button aria-label="Powiększ">
        <Svg w={9}><path d="M.5 4.500h8M4.500.500v8" stroke="#555" strokeWidth="1.800" /></Svg>
      </button>
      <ZoomValue>100%</ZoomValue>
    </StatusBar>
  </>
);

const OptionsDialog = () => (
  <Dialog role="dialog" aria-label="Opcje programu Excel">
    <DialogTitle>
      <h2>Opcje programu Excel</h2>
      <HelpButton aria-label="Pomoc">?</HelpButton>
      <button aria-label="Zamknij okno">
        <Svg w={12}><path d="M1 1l10 10M11 1L1 11" stroke="#222" strokeWidth="1.200" /></Svg>
      </button>
    </DialogTitle>
    <DialogBody>
      <DialogNav>
        {["Ogólne", "Formuły", "Sprawdzanie", "Zapisywanie", "Język", "Zaawansowane"].map((t) => (
          <NavItem key={t} $on={t === "Zaawansowane"}>{t}</NavItem>
        ))}
        <hr />
        <NavItem>Dostosowywanie Wstążki</NavItem>
        <NavItem>Pasek narzędzi Szybki dostęp</NavItem>
        <hr />
        <NavItem>Dodatki</NavItem>
        <NavItem>Centrum zaufania</NavItem>
      </DialogNav>
      <OptionsPane>
        <Scrolled>
          <OptionRow $indent={31}>
            <Radio type="radio" name="direction" />
            <Mnemonic text="&Od lewej do prawej" />
          </OptionRow>
          <Spacer />
          <SectionHead $gap={16}>
            <h3><label htmlFor="book"><Mnemonic text="Opcje wyświetlania &dla tego skoroszytu:" /></label></h3>
            <Field $w={185} $pl={5} $top>
              <ExcelFileIcon />
              <Select id="book"><option>Zeszyt1</option></Select>
              <Caret $size={4} $color="#555" />
            </Field>
          </SectionHead>
          {workbookOptions.map((t) => (
            <OptionRow key={t}>
              <Tick type="checkbox" defaultChecked />
              <Mnemonic text={t} />
            </OptionRow>
          ))}
          <SubLabel $indent={14}>Dla obiektów pokaż:</SubLabel>
          <OptionRow $indent={31}>
            <Radio type="radio" name="objects" defaultChecked />
            <Mnemonic text="Ws&zystko" />
          </OptionRow>
          <OptionRow $indent={31}>
            <Radio type="radio" name="objects" />
            <Mnemonic text="Nic (ukry&j obiekty)" />
          </OptionRow>
          <Spacer />
          <SectionHead>
            <h3><label htmlFor="sheet"><Mnemonic text="Opcje wyświetlania dla tego &arkusza:" /></label></h3>
            <Field $w={168} $pl={5} $top>
              <SheetFileIcon />
              <Select id="sheet"><option>Arkusz1</option></Select>
              <Caret $size={4} $color="#555" />
            </Field>
          </SectionHead>
          {sheetOptions.map((o) => (
            <OptionRow key={o.text} $mark={o.mark}>
              <Tick type="checkbox" defaultChecked={o.on} $pressed={o.mark} />
              <Mnemonic text={o.text} />
            </OptionRow>
          ))}
          <Inline $mt={3} $gap={12}>
            <OptionRow as="span" $indent={14}>
              <Mnemonic text="&Kolor linii siatki" />
            </OptionRow>
            <ColorButton aria-label="Kolor linii siatki">
              <BucketIcon />
              <Caret $size={4} $color="#555" />
            </ColorButton>
          </Inline>
          <SectionHead><h3>Formuły</h3></SectionHead>
          <OptionRow>
            <Tick type="checkbox" defaultChecked />
            <Mnemonic text="Włącz obliczenia &wielowątkowe" />
          </OptionRow>
          <SubLabel $indent={32}>Liczba wątków obliczeń</SubLabel>
          <Inline $gap={16}>
            <OptionRow $indent={58}>
              <Radio type="radio" name="threads" defaultChecked />
              <Mnemonic text="&Użyj wszystkich procesorów w tym komputerze:" />
            </OptionRow>
            <SubLabel>8</SubLabel>
          </Inline>
          <Inline $mt={2} $gap={12}>
            <OptionRow $indent={58}>
              <Radio type="radio" name="threads" />
              <Mnemonic text="&Ręcznie" />
            </OptionRow>
            <Field $w={66} $pl={3}>
              <TextInput aria-label="Liczba wątków" defaultValue="8" />
              <Spin />
            </Field>
          </Inline>
          <Inline $mt={3} $gap={4} $disabled>
            <OptionRow>
              <Tick type="checkbox" disabled />
              <Mnemonic text="Zezwalaj na uruchamianie zdefiniowanych przez użytkownika funkcji &XLL w klastrze obliczeniowym" />
            </OptionRow>
            <Svg w={11}>
              <circle cx="5.500" cy="5.500" r="5" stroke="#7ba7dd" />
              <path d="M5.500 5v3.500M5.500 2.500v1.200" stroke="#5b8fd0" />
            </Svg>
          </Inline>
          <Inline $mt={6} $gap={9} $disabled>
            <ClusterLabel htmlFor="cluster">Typ klastra:</ClusterLabel>
            <Field $w={296}>
              <TextInput id="cluster" disabled />
            </Field>
            <DialogButton $disabled>Opcje...</DialogButton>
          </Inline>
        </Scrolled>
        <PaneScroll>
          <ScrollButton aria-label="Przewiń w górę"><Caret $up $size={4} $color="#666" /></ScrollButton>
          <PaneThumb />
          <ScrollButton aria-label="Przewiń w dół"><Caret $size={4} $color="#666" /></ScrollButton>
        </PaneScroll>
      </OptionsPane>
    </DialogBody>
    <DialogFooter>
      <DialogButton $primary>OK</DialogButton>
      <DialogButton>Anuluj</DialogButton>
    </DialogFooter>
    <ResizeGrip />
  </Dialog>
);

const Logo = () => (
  <LogoMark width="262" height="94" viewBox="1068 268 262 94" role="img" aria-label="www.slow7.pl">
    <g fontFamily="Open Sans" fontWeight="700" fontSize="35" fill="#000">
      <text x="1070" y="334">www.</text>
      <text x="1285" y="334">.pl</text>
    </g>
    <path d="M1182 273l95.500 24.500-72 19L1182 310z" fill="#330806" stroke="#777" strokeWidth=".6" />
    <g transform="translate(1183 304) skewY(10)">
      <text fontFamily="Open Sans" fontWeight="700" fontSize="29" fill="#fff">slow</text>
    </g>
    <path d="M1182.500 322l95-24v36l-95 24z" fill="#fdfafb" stroke="#5b3a38" />
    <g transform="translate(1220 345) skewY(-12)">
      <text fontFamily="Open Sans" fontStyle="italic" fontWeight="700" fontSize="38" fill="#000">7</text>
    </g>
  </LogoMark>
);

export default function App() {
  return (
    <Window>
      <GlobalStyle />
      <Header />
      <RibbonPanel />
      <Formula />
      <Sheet />
      <Bottom />
      <OptionsDialog />
      <Logo />
      <ArrowMark width="166" height="180" viewBox="1162 513 166 180" aria-hidden="true">
        <path d="M1167.500 686L1314 525" stroke="#000" strokeWidth="1.800" />
        <path d="M1321 517l-9 18-1.500-6-6-1z" fill="#000" />
      </ArrowMark>
      <Callout>linia podziału stron</Callout>
    </Window>
  );
}
